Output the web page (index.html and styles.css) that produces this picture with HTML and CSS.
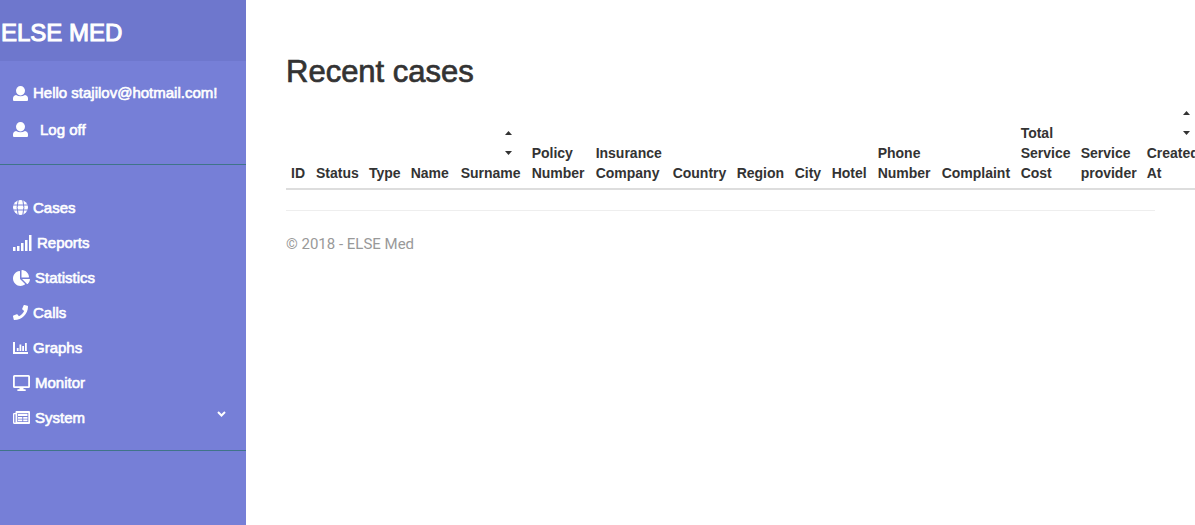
FILE: index.html
```
<!DOCTYPE html>
<html lang="en">

<head>
    <meta charset="UTF-8">
    <meta name="viewport" content="width=device-width, initial-scale=1.0">
    <title>Recent cases - ELSE Med</title>
    <link rel="stylesheet" href="styles.css">
</head>

<body>
    <div class="wrapper">

        <!-- Sidebar -->
        <nav class="sidebar">
            <div class="sidebar-header">
                <h3>ELSE MED</h3>
            </div>

            <ul class="user-links">
                <li>
                    <a href="#">
                        <svg width="15" height="15" viewBox="0 0 15 15"><ellipse cx="7.5" cy="4.700" rx="4.500" ry="4.700"/><path d="M3 9Q7.500 11.500 12 9Q15 9.800 15 12.500V14Q15 15 14 15H1Q0 15 0 14V12.500Q0 9.800 3 9z"/></svg>
                        Hello stajilov@hotmail.com!
                    </a>
                </li>
                <li>
                    <button type="button" class="logoff">
                        <svg width="15" height="15" viewBox="0 0 15 15"><ellipse cx="7.5" cy="4.700" rx="4.500" ry="4.700"/><path d="M3 9Q7.500 11.500 12 9Q15 9.800 15 12.500V14Q15 15 14 15H1Q0 15 0 14V12.500Q0 9.800 3 9z"/></svg>
                        Log off
                    </button>
                </li>
            </ul>

            <ul class="components">
                <li>
                    <a href="#">
                        <svg width="15" height="15" viewBox="0 0 15 15"><circle cx="7.5" cy="7.5" r="7.5"/><path class="cut" d="M0 5h15M0 10h15M5.200 0Q3 7.500 5.200 15M9.800 0Q12 7.500 9.800 15"/></svg>
                        Cases
                    </a>
                </li>
                <li>
                    <a href="#">
                        <svg width="19" height="16" viewBox="0 0 19 16"><path d="M0 12h2.500v4H0zM4 11h2.500v5H4zM8 8h2.500v8H8zM12 5h2.500v11H12zM16 0h2.500v16H16z"/></svg>
                        Reports
                    </a>
                </li>
                <li>
                    <a href="#">
                        <svg width="17" height="16" viewBox="0 0 544 512"><path d="M527.79 288H290.5l158.03 158.03c6.04 6.04 15.98 6.53 22.19.68 38.7-36.46 65.32-85.61 73.13-140.86 1.34-9.46-6.51-17.85-16.06-17.85zm-15.83-64.8C503.72 103.74 408.26 8.28 288.8.04 279.68-.59 272 7.1 272 16.24V240h223.77c9.14 0 16.82-7.68 16.19-16.8zM224 288V50.71c0-9.55-8.39-17.4-17.84-16.06C86.99 51.49-4.1 155.6.14 280.37 4.5 408.51 114.83 513.59 243.03 511.98c50.4-.63 96.97-16.87 135.26-44.03 7.9-5.6 8.42-17.23 1.57-24.08L224 288z"/></svg>
                        Statistics
                    </a>
                </li>
                <li>
                    <a href="#">
                        <svg width="15" height="15" viewBox="0 0 512 512"><path d="M493.4 24.6l-104-24c-11.3-2.6-22.9 3.3-27.5 13.9l-48 112c-4.2 9.8-1.4 21.3 6.9 28l60.6 49.6c-36 76.700-98.900 140.500-177.200 177.200l-49.600-60.600c-6.800-8.300-18.200-11.100-28-6.900l-112 48C3.900 366.500-2 378.100.6 389.400l24 104C27.100 504.200 36.700 512 48 512c256.100 0 464-207.500 464-464 0-11.200-7.700-20.900-18.600-23.400z"/></svg>
                        Calls
                    </a>
                </li>
                <li>
                    <a href="#">
                        <svg width="15" height="12" viewBox="0 0 15 12"><path d="M0 0h2v10h13v2H0zM3.800 6h1.800v3H3.800zM6.500 2.500h1.800V9H6.500zM9.200 4h1.800v5H9.200zM12 1h1.800v8H12z"/></svg>
                        Graphs
                    </a>
                </li>
                <li>
                    <a href="#">
                        <svg width="17" height="16" viewBox="0 0 17 16"><path fill-rule="evenodd" d="M1.500 0h14Q17 0 17 1.500v10Q17 13 15.500 13H10.500v1.200h1.500q.8 0 .8 1t-.8.800H5q-.8 0-.8-.8t.8-1h1.500V13h-5Q0 13 0 11.500v-10Q0 0 1.500 0zM1.800 1.800v9.400h13.400V1.800z"/></svg>
                        Monitor
                    </a>
                </li>
                <li>
                    <a href="#" class="has-menu">
                        <svg width="17" height="13" viewBox="0 0 17 13"><path fill-rule="evenodd" d="M3.500 0h12.500q1 0 1 1v11q0 1-1 1H1.500Q0 13 0 11.500V3q0-1 1-1h1.500V1q0-1 1-1zM1.300 3.300v8.200h1.200V3.300zM4.300 2v9h11V2zM5 2.800h9.500v2.200H5zM5 6h4.300v1.700H5zM10.200 6h4.300v1.700h-4.300zM5 8.600h4.300v1.700H5zM10.200 8.600h4.300v1.700h-4.300z"/></svg>
                        System
                        <svg class="chevron" width="9" height="13" viewBox="0 0 9 13"><path d="M1 1l3.500 3.500L8 1"/></svg>
                    </a>
                </li>
            </ul>
        </nav>

        <!-- Page Content -->
        <main class="content">
            <h2>Recent cases</h2>

            <table class="cases">
                <thead>
                    <tr>
                        <th class="id">ID</th>
                        <th class="status">Status</th>
                        <th class="type">Type</th>
                        <th class="name">Name</th>
                        <th class="surname">
                            <div class="sort">
                                <button type="button" aria-label="Sort by surname, ascending"><svg width="7" height="4" viewBox="0 0 7 4"><path d="M0 4L3.500 0 7 4z"/></svg></button>
                                <button type="button" aria-label="Sort by surname, descending"><svg width="7" height="4" viewBox="0 0 7 4"><path d="M0 0h7L3.500 4z"/></svg></button>
                            </div>
                            Surname
                        </th>
                        <th class="number">Policy Number</th>
                        <th class="company">Insurance Company</th>
                        <th class="country">Country</th>
                        <th class="region">Region</th>
                        <th class="city">City</th>
                        <th class="hotel">Hotel</th>
                        <th class="number">Phone Number</th>
                        <th class="complaint">Complaint</th>
                        <th class="cost">Total Service Cost</th>
                        <th class="provider">Service provider</th>
                        <th class="created">
                            <div class="sort">
                                <button type="button" aria-label="Sort by date, ascending"><svg width="7" height="4" viewBox="0 0 7 4"><path d="M0 4L3.500 0 7 4z"/></svg></button>
                                <button type="button" aria-label="Sort by date, descending"><svg width="7" height="4" viewBox="0 0 7 4"><path d="M0 0h7L3.500 4z"/></svg></button>
                            </div>
                            Created At
                        </th>
                    </tr>
                </thead>
                <tbody></tbody>
            </table>

            <hr>
            <footer>
                <p>&copy; 2018 - ELSE Med</p>
            </footer>
        </main>

    </div>
</body>

</html>
```
FILE: styles.css
```
* {
    margin: 0;
    padding: 0;
    box-sizing: border-box;
}

body {
    background: #fff;
    color: #333;
    font-family: "Liberation Sans", Arial, sans-serif;
    font-size: 14px;
    line-height: 20px;
    overflow-x: hidden;
}

.wrapper {
    display: flex;
    min-height: 100vh;
}

/* Sidebar */
.sidebar {
    flex: 0 0 246px;
    background: #767fd7;
    color: #fff;
    -webkit-text-stroke: 0.6px #fff;
}

.sidebar-header {
    padding: 20px 1px 15px;
    background: #6e77cd;
}

.sidebar h3 {
    font-size: 24px;
    font-weight: normal;
    line-height: 26px;
    -webkit-text-stroke: 1px #fff;
}

.sidebar ul {
    list-style: none;
    border-bottom: 1px solid #3f7489;
}

.user-links {
    padding: 14px 0 17px;
}

.components {
    padding: 25px 0 15px;
}

.sidebar a,
.sidebar button {
    display: flex;
    align-items: center;
    gap: 5px;
    width: 100%;
    height: 35px;
    padding: 0 20px 0 13px;
    border: none;
    background: none;
    color: #fff;
    font-family: inherit;
    font-size: 15px;
    text-decoration: none;
    cursor: pointer;
    -webkit-text-stroke: inherit;
}

.sidebar .user-links a,
.sidebar .user-links button {
    height: 36px;
}

.sidebar .logoff {
    gap: 12px;
}

.sidebar a:hover {
    background: #6e77cd;
}

.sidebar svg {
    flex: none;
    fill: currentColor;
}

.sidebar .cut {
    fill: none;
    stroke: #767fd7;
    stroke-width: 1;
}

.sidebar .chevron {
    margin-left: auto;
    fill: none;
    stroke: currentColor;
    stroke-width: 2;
}

/* Page content */
.content {
    flex: 1;
    min-width: 0;
    padding: 35px 40px;
}

h2 {
    margin: 20px 0 10px;
    font-size: 31px;
    font-weight: normal;
    line-height: 33px;
    -webkit-text-stroke: 0.7px #333;
}

.cases {
    width: 100%;
    margin-bottom: 20px;
    border-collapse: collapse;
}

.cases th {
    padding: 5px;
    border-bottom: 2px solid #ddd;
    text-align: left;
    vertical-align: bottom;
}

/* Column widths */
.id { min-width: 25px; }
.status { min-width: 53px; }
.type { min-width: 41px; }
.name { min-width: 50px; }
.surname { min-width: 71px; }
.number { min-width: 64px; }
.company { min-width: 77px; }
.country { min-width: 64px; }
.region { min-width: 58px; }
.city { min-width: 37px; }
.hotel { min-width: 46px; }
.complaint { min-width: 79px; }
.cost { min-width: 60px; }
.provider { min-width: 66px; }
.created { min-width: 63px; }

.sort {
    display: flex;
    flex-direction: column;
    align-items: flex-end;
    padding-right: 10px;
}

.sort button {
    display: flex;
    align-items: center;
    height: 20px;
    border: none;
    background: none;
    cursor: pointer;
}

.sort svg {
    fill: #333;
}

hr {
    margin-bottom: 20px;
    border: none;
    border-top: 1px solid #eee;
}

footer p {
    color: #999;
    font-family: Roboto, sans-serif;
    font-size: 15px;
    line-height: 26px;
}
```
